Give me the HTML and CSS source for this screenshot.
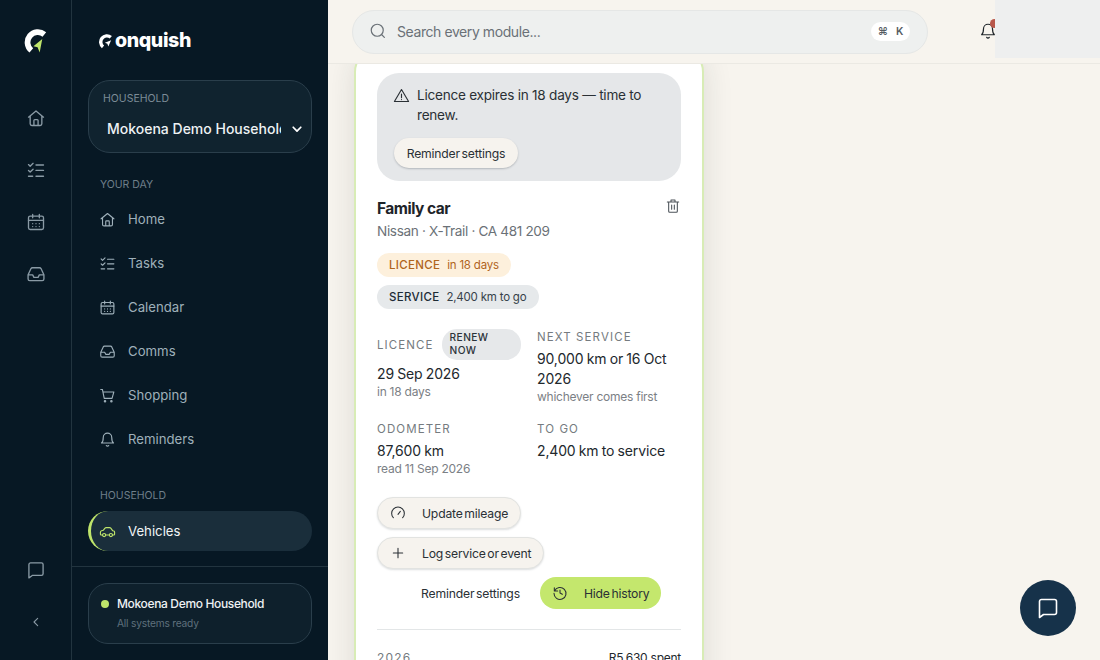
FILE: index.html
```html
<!DOCTYPE html>
<html lang="en">
<head>
    <meta charset="UTF-8">
    <meta name="viewport" content="width=device-width, initial-scale=1.0">
    <title>Conquish - Vehicles</title>
    <link rel="stylesheet" href="styles.css">
</head>
<body>
    <svg class="sprites" width="0" height="0">
        <symbol id="i-home" viewBox="0 0 24 24"><path d="M3 11 12 3.500 21 11M5 9.500V19a2 2 0 0 0 2 2h10a2 2 0 0 0 2-2V9.500M9.500 21v-6a1 1 0 0 1 1-1h3a1 1 0 0 1 1 1v6"/></symbol>
        <symbol id="i-tasks" viewBox="0 0 24 24"><path d="M3 5.500 5 7.500 8.500 4M3 12.500 5 14.500 8.500 11M3 19.500h5M12 6h9M12 12.500h9M12 19.500h9"/></symbol>
        <symbol id="i-calendar" viewBox="0 0 24 24"><rect x="3" y="5" width="18" height="16" rx="2"/><path d="M3 10h18M8 3v4M16 3v4M8 14h.01M12 14h.01M16 14h.01M8 17.500h.01M12 17.500h.01M16 17.500h.01"/></symbol>
        <symbol id="i-inbox" viewBox="0 0 24 24"><path d="M2.500 13 6 5.500A2 2 0 0 1 7.800 4.500h8.400A2 2 0 0 1 18 5.500L21.500 13v5a2 2 0 0 1-2 2h-15a2 2 0 0 1-2-2zM2.500 13H8l1.500 3h5l1.500-3h5.500"/></symbol>
        <symbol id="i-cart" viewBox="0 0 24 24"><path d="M2.500 3.500h2.300l2.600 12.500h11L21 7H5.600"/><circle cx="8.500" cy="20" r="1"/><circle cx="17.500" cy="20" r="1"/></symbol>
        <symbol id="i-bell" viewBox="0 0 24 24"><path d="M6 9a6 6 0 0 1 12 0c0 6 2.500 8 2.500 8h-17S6 15 6 9M10.300 20.500a2 2 0 0 0 3.400 0"/></symbol>
        <symbol id="i-car" viewBox="0 0 24 24"><path d="M5 17H3a1 1 0 0 1-1-1v-3c0-1 .8-1.700 1.700-2L6 10.300 8.500 7.200A2 2 0 0 1 10 6.500h5a2 2 0 0 1 1.600.8L19.500 11l1.400.400c.7.200 1.100.8 1.100 1.500V16a1 1 0 0 1-1 1h-2M9.500 17h5"/><circle cx="7.200" cy="17" r="2.200"/><circle cx="16.800" cy="17" r="2.200"/></symbol>
        <symbol id="i-chat" viewBox="0 0 24 24"><path d="M3.500 5.500a2 2 0 0 1 2-2h13a2 2 0 0 1 2 2v11a2 2 0 0 1-2 2H7.500l-4 3z"/></symbol>
    </svg>

    <div class="shell">
        <nav class="rail">
            <svg class="brand-mark" viewBox="0 0 24 24">
                <path class="mark-arc" d="M20.500 5.200A9 9 0 1 0 8 20.500"/>
                <path class="mark-lime" d="M18.500 9.500 10 16.500 14 17.500 16 22.500z"/>
            </svg>
            <div class="rail-links">
                <svg class="rail-icon"><use href="#i-home"/></svg>
                <svg class="rail-icon"><use href="#i-tasks"/></svg>
                <svg class="rail-icon"><use href="#i-calendar"/></svg>
                <svg class="rail-icon"><use href="#i-inbox"/></svg>
            </div>
            <div class="rail-bottom">
                <svg class="rail-icon"><use href="#i-chat"/></svg>
                <svg class="rail-icon rail-collapse" viewBox="0 0 24 24"><path d="M14.500 6.500 9 12l5.500 5.500"/></svg>
            </div>
        </nav>

        <aside class="sidebar">
            <div class="sidebar-top">
                <div class="wordmark">
                    <svg class="wordmark-c" viewBox="0 0 24 24">
                        <path class="mark-arc" d="M20.500 5.200A9 9 0 1 0 8 20.500"/>
                        <path class="mark-white" d="M21 10 11 14 15 15.500 16.500 20z"/>
                    </svg>
                    <span>onquish</span>
                </div>
                <div class="household">
                    <div class="household-label">HOUSEHOLD</div>
                    <div class="household-row">
                        <span class="household-name">Mokoena Demo Household</span>
                        <svg class="household-chev" viewBox="0 0 24 24"><path d="M5.500 9 12 15.500 18.500 9"/></svg>
                    </div>
                </div>
                <div class="nav-title">YOUR DAY</div>
                <a class="nav-item"><svg><use href="#i-home"/></svg>Home</a>
                <a class="nav-item"><svg><use href="#i-tasks"/></svg>Tasks</a>
                <a class="nav-item"><svg><use href="#i-calendar"/></svg>Calendar</a>
                <a class="nav-item"><svg><use href="#i-inbox"/></svg>Comms</a>
                <a class="nav-item"><svg><use href="#i-cart"/></svg>Shopping</a>
                <a class="nav-item"><svg><use href="#i-bell"/></svg>Reminders</a>
                <div class="nav-title nav-title-second">HOUSEHOLD</div>
                <a class="nav-item active"><svg><use href="#i-car"/></svg>Vehicles</a>
            </div>
            <div class="sidebar-foot">
                <div class="status-card">
                    <div class="status-name"><span class="status-dot"></span>Mokoena Demo Household</div>
                    <div class="status-sub">All systems ready</div>
                </div>
            </div>
        </aside>

        <div class="main">
            <header class="topbar">
                <div class="search">
                    <svg class="search-icon" viewBox="0 0 24 24"><circle cx="11" cy="11" r="8"/><path d="m20.500 20.500-3.800-3.800"/></svg>
                    <span class="search-text">Search every module...</span>
                    <span class="kbd"><span>⌘</span><span>K</span></span>
                </div>
                <svg class="bell"><use href="#i-bell"/></svg>
                <span class="bell-dot"></span>
                <div class="top-blank"></div>
            </header>

            <div class="content">
                <article class="card">
                    <div class="alert">
                        <div class="alert-row">
                            <svg viewBox="0 0 24 24"><path d="M12 3.500 2 20.500h20zM12 10v5M12 17.800h.01"/></svg>
                            <span>Licence expires in 18 days — time to renew.</span>
                        </div>
                        <button class="alert-btn">Reminder settings</button>
                    </div>

                    <div class="car-head">
                        <div>
                            <h2>Family car</h2>
                            <div class="car-sub">Nissan · X-Trail · CA 481 209</div>
                        </div>
                        <svg class="trash" viewBox="0 0 24 24"><path d="M3.500 6h17M9 6V3h6v3M5.500 6v14a1.500 1.500 0 0 0 1.500 1.500h10a1.500 1.500 0 0 0 1.500-1.500V6M10 10.500v6.500M14 10.500v6.500"/></svg>
                    </div>

                    <div class="pills">
                        <span class="pill pill-amber"><b>LICENCE</b>in 18 days</span>
                        <span class="pill pill-grey"><b>SERVICE</b>2,400 km to go</span>
                    </div>

                    <div class="facts">
                        <div class="fact">
                            <div class="fact-label fact-label-badge">LICENCE <span class="badge">RENEW NOW</span></div>
                            <div class="fact-value">29 Sep 2026</div>
                            <div class="fact-note">in 18 days</div>
                        </div>
                        <div class="fact">
                            <div class="fact-label">NEXT SERVICE</div>
                            <div class="fact-value">90,000 km or 16 Oct 2026</div>
                            <div class="fact-note">whichever comes first</div>
                        </div>
                        <div class="fact">
                            <div class="fact-label">ODOMETER</div>
                            <div class="fact-value">87,600 km</div>
                            <div class="fact-note">read 11 Sep 2026</div>
                        </div>
                        <div class="fact">
                            <div class="fact-label">TO GO</div>
                            <div class="fact-value">2,400 km to service</div>
                        </div>
                    </div>

                    <div class="actions">
                        <button class="action"><svg viewBox="0 0 24 24"><path d="M5 19A9.500 9.500 0 1 1 19 19M12 14l3.500-4.500"/></svg>Update mileage</button>
                        <button class="action"><svg viewBox="0 0 24 24"><path d="M12 5v14M5 12h14"/></svg>Log service or event</button>
                        <div class="actions-row">
                            <button class="action-plain">Reminder settings</button>
                            <button class="action-lime"><svg viewBox="0 0 24 24"><path d="M3.500 4v5h5M3.800 9A9 9 0 1 1 3 12.500M12 7.500V12l3.500 2"/></svg>Hide history</button>
                        </div>
                    </div>

                    <div class="history-head"><span class="history-year">2026</span><span>R5,630 spent</span></div>
                </article>
            </div>
        </div>
    </div>

    <button class="fab"><svg viewBox="0 0 24 24"><path d="M3.500 5.500a2 2 0 0 1 2-2h13a2 2 0 0 1 2 2v11a2 2 0 0 1-2 2H7.500l-4 3z"/></svg></button>
</body>
</html>
```

FILE: styles.css
```css
* {
    box-sizing: border-box;
}
body {
    margin: 0;
    font-family: Inter, "Liberation Sans", sans-serif;
    background-color: #f7f4ee;
    color: #20262b;
    overflow: hidden;
}
button {
    font-family: inherit;
    cursor: pointer;
}
svg {
    fill: none;
    stroke: currentColor;
    stroke-width: 1.6;
    stroke-linecap: round;
    stroke-linejoin: round;
}
.sprites {
    position: absolute;
}
.mark-arc {
    stroke: #ffffff;
    stroke-width: 5.500;
    stroke-linecap: butt;
}
.mark-white {
    fill: #ffffff;
    stroke: none;
}
.mark-lime {
    fill: #bfe56b;
    stroke: none;
}

.shell {
    display: grid;
    grid-template-columns: 72px 256px 1fr;
    height: 100vh;
}

/* icon rail */
.rail {
    background-color: #071824;
    border-right: 1px solid #22343f;
    display: flex;
    flex-direction: column;
    align-items: center;
    color: #8a9aa5;
    padding-top: 29px;
}
.brand-mark {
    width: 25px;
    height: 25px;
}
.rail-links {
    display: flex;
    flex-direction: column;
    gap: 32px;
    margin-top: 54px;
}
.rail-icon {
    width: 20px;
    height: 20px;
    display: block;
}
.rail-bottom {
    margin-top: auto;
    padding-bottom: 30px;
    display: flex;
    flex-direction: column;
    align-items: center;
    gap: 34px;
}
.rail-collapse {
    width: 16px;
    height: 16px;
}

/* sidebar */
.sidebar {
    background-color: #071824;
    display: flex;
    flex-direction: column;
    justify-content: space-between;
}
.sidebar-top {
    padding: 27px 16px 0;
}
.wordmark {
    display: flex;
    align-items: center;
    gap: 2px;
    height: 26px;
    padding-left: 10px;
    color: #ffffff;
    font-size: 19.600px;
    font-weight: 800;
    letter-spacing: -0.4px;
}
.wordmark-c {
    width: 15px;
    height: 15px;
    margin-top: 3px;
}
.household {
    margin-top: 27px;
    height: 73px;
    background-color: #10232f;
    border: 1px solid #2a3e4b;
    border-radius: 22px;
    padding: 11px 7px 0 14px;
}
.household-label {
    font-size: 10.500px;
    line-height: 13px;
    color: #7c8c97;
}
.household-row {
    display: flex;
    align-items: center;
    margin-top: 15px;
    padding-left: 4px;
}
.household-name {
    width: 174px;
    flex: none;
    white-space: nowrap;
    overflow: hidden;
    font-size: 14px;
    font-weight: 500;
    color: #eef2f4;
}
.household-chev {
    width: 14px;
    height: 14px;
    margin-left: 9px;
    color: #ffffff;
    stroke-width: 3;
}
.nav-title {
    font-size: 10.500px;
    line-height: 13px;
    color: #6f7f8a;
    padding-left: 12px;
    margin-top: 25px;
    margin-bottom: 6px;
}
.nav-title-second {
    margin-top: 28px;
    margin-bottom: 9px;
}
.nav-item {
    display: flex;
    align-items: center;
    gap: 12px;
    height: 44px;
    padding-left: 11px;
    font-size: 13.200px;
    color: #9fb0ba;
}
.nav-item svg {
    width: 17px;
    height: 17px;
    flex: none;
}
.nav-item.active {
    height: 40px;
    background-color: #1a2e3b;
    border-radius: 20px;
    border-left: 3px solid #bfe56b;
    padding-left: 8px;
    color: #f2f5f6;
}
.nav-item.active svg {
    color: #bfe56b;
}
.sidebar-foot {
    border-top: 1px solid #22343f;
    padding: 16px 16px 16px;
}
.status-card {
    height: 61px;
    background-color: #0e202c;
    border: 1px solid #2a3e4b;
    border-radius: 20px;
    padding: 11px 12px 0;
}
.status-name {
    display: flex;
    align-items: center;
    gap: 8px;
    font-size: 12px;
    font-weight: 500;
    line-height: 18px;
    letter-spacing: -0.35px;
    color: #eef2f4;
}
.status-dot {
    width: 8px;
    height: 8px;
    border-radius: 50%;
    background-color: #bfe56b;
}
.status-sub {
    margin-top: 3px;
    padding-left: 16px;
    font-size: 10.200px;
    line-height: 14px;
    letter-spacing: -0.2px;
    color: #5f707c;
}

/* top bar */
.main {
    display: flex;
    flex-direction: column;
    min-width: 0;
    height: 100vh;
}
.topbar {
    position: relative;
    z-index: 2;
    flex: none;
    height: 64px;
    background-color: #f7f4ee;
    border-bottom: 1px solid #ebe9e3;
    padding: 10px 24px 0;
    display: flex;
    align-items: flex-start;
}
.search {
    width: 576px;
    height: 44px;
    background-color: #eef0ef;
    border: 1px solid #e5e7e6;
    border-radius: 22px;
    display: flex;
    align-items: center;
    padding: 0 17px 2px 16px;
    color: #6a7177;
}
.search-icon {
    width: 18px;
    height: 18px;
    flex: none;
}
.search-text {
    margin-left: 10px;
    font-size: 14px;
    letter-spacing: -0.42px;
}
.kbd {
    margin-left: auto;
    width: 39px;
    height: 19px;
    background-color: #ffffff;
    border-radius: 10px;
    display: flex;
    align-items: center;
    justify-content: center;
    gap: 8px;
    font-size: 10.500px;
    font-weight: 600;
    color: #555c62;
}
.bell {
    width: 18px;
    height: 18px;
    margin: 12px 0 0 51px;
    color: #20262b;
}
.bell-dot {
    position: absolute;
    left: 662px;
    top: 19px;
    width: 9px;
    height: 9px;
    border-radius: 50%;
    background-color: #b8574a;
}
.top-blank {
    position: absolute;
    right: 0;
    top: 0;
    width: 105px;
    height: 58px;
    background-color: #eeefef;
}

/* card */
.content {
    flex: 1;
    min-height: 0;
    overflow: hidden;
    padding-left: 26px;
}
.card {
    width: 350px;
    margin-top: -16px;
    padding: 23px 21px 60px 21px;
    background-color: #ffffff;
    border: 2px solid #d8ecb6;
    border-radius: 24px;
    box-shadow: 0 4px 30px rgba(30, 40, 40, 0.12);
}
.alert {
    height: 108px;
    background-color: #e5e7e9;
    border-radius: 22px;
    padding: 12px 16px 0;
}
.alert-row {
    display: flex;
    gap: 8px;
    font-size: 13.600px;
    line-height: 20px;
    letter-spacing: -0.25px;
    color: #2a3035;
}
.alert-row svg {
    width: 17px;
    height: 17px;
    flex: none;
    margin-top: 2px;
    margin-right: -1px;
}
.alert-btn {
    margin-top: 13px;
    margin-left: 1px;
    height: 30px;
    width: 124px;
    padding: 0;
    border: 0;
    border-radius: 15px;
    background-color: #f6f3ee;
    box-shadow: 0 1px 2px rgba(30, 40, 50, 0.25);
    font-size: 12.200px;
    letter-spacing: -0.2px;
    word-spacing: -1.500px;
    color: #2a3035;
}
.car-head {
    display: flex;
    justify-content: space-between;
    margin-top: 17px;
}
h2 {
    margin: 0;
    font-size: 15.500px;
    line-height: 22px;
    font-weight: 700;
    letter-spacing: -0.5px;
    color: #1e2429;
}
.car-sub {
    margin-top: 1px;
    font-size: 13.600px;
    line-height: 20px;
    letter-spacing: -0.35px;
    color: #6b7177;
}
.trash {
    width: 16px;
    height: 16px;
    color: #4c5359;
}
.pills {
    display: flex;
    flex-direction: column;
    align-items: flex-start;
    gap: 8px;
    margin-top: 12px;
}
.pill {
    height: 24px;
    border-radius: 12px;
    padding: 0 12px;
    display: flex;
    align-items: center;
    gap: 7px;
    font-size: 11.500px;
    letter-spacing: -0.2px;
}
.pill b {
    font-weight: 500;
    letter-spacing: 0.3px;
}
.pill-amber {
    background-color: #fdf0dc;
    color: #b0641c;
}
.pill-grey {
    background-color: #e6e9eb;
    color: #37424a;
    padding-right: 13px;
}
.pill-grey b {
    color: #1d2b35;
}
.facts {
    display: grid;
    grid-template-columns: 144px 144px;
    column-gap: 16px;
    row-gap: 16px;
    margin-top: 20px;
}
.fact-label {
    font-size: 11.500px;
    line-height: 16px;
    letter-spacing: 1.1px;
    color: #757b80;
}
.fact-label-badge {
    display: flex;
    align-items: center;
    gap: 8px;
}
.badge {
    width: 79px;
    height: 31px;
    flex: none;
    background-color: #e6e8ea;
    border-radius: 15px;
    padding: 2px 8px;
    font-size: 10.200px;
    line-height: 13px;
    font-weight: 500;
    letter-spacing: 0.4px;
    color: #2c343a;
}
.fact-value {
    margin-top: 4px;
    font-size: 14px;
    line-height: 20px;
    letter-spacing: -0.15px;
    word-spacing: -0.500px;
    color: #22282d;
}
.fact-note {
    font-size: 12px;
    line-height: 16px;
    letter-spacing: -0.25px;
    color: #7b8085;
}
.actions {
    display: flex;
    flex-direction: column;
    align-items: flex-start;
    gap: 8px;
    margin-top: 20px;
}
.action {
    height: 32px;
    padding: 0 12px;
    display: flex;
    align-items: center;
    gap: 16px;
    background-color: #f6f3ee;
    border: 1px solid #e2e3e1;
    border-radius: 16px;
    box-shadow: 0 1px 2px rgba(30, 40, 50, 0.15);
    font-size: 12.200px;
    letter-spacing: -0.2px;
    word-spacing: -1.500px;
    color: #2a3035;
}
.action svg {
    width: 16px;
    height: 16px;
    flex: none;
}
.actions-row {
    display: flex;
    align-items: center;
    gap: 20px;
    padding-left: 44px;
}
.action-plain {
    padding: 0;
    border: 0;
    background: none;
    font-size: 12.200px;
    letter-spacing: -0.18px;
    word-spacing: -1.500px;
    color: #2a3035;
}
.action-lime {
    height: 32px;
    padding: 0 12px;
    display: flex;
    align-items: center;
    gap: 16px;
    border: 0;
    border-radius: 16px;
    background-color: #c4e76d;
    font-size: 12.200px;
    letter-spacing: -0.2px;
    word-spacing: -1.500px;
    color: #2a3035;
}
.action-lime svg {
    width: 16px;
    height: 16px;
    flex: none;
}
.history-head {
    margin-top: 20px;
    padding-top: 20px;
    border-top: 1px solid #e3e6e7;
    display: flex;
    justify-content: space-between;
    font-size: 12px;
    line-height: 16px;
    letter-spacing: -0.25px;
    color: #22282d;
}
.history-year {
    letter-spacing: 1.2px;
    color: #757b80;
}

.fab {
    position: fixed;
    right: 24px;
    bottom: 24px;
    width: 56px;
    height: 56px;
    border: 0;
    border-radius: 50%;
    background-color: #16324a;
    color: #ffffff;
    display: flex;
    align-items: center;
    justify-content: center;
}
.fab svg {
    width: 24px;
    height: 24px;
}
```
